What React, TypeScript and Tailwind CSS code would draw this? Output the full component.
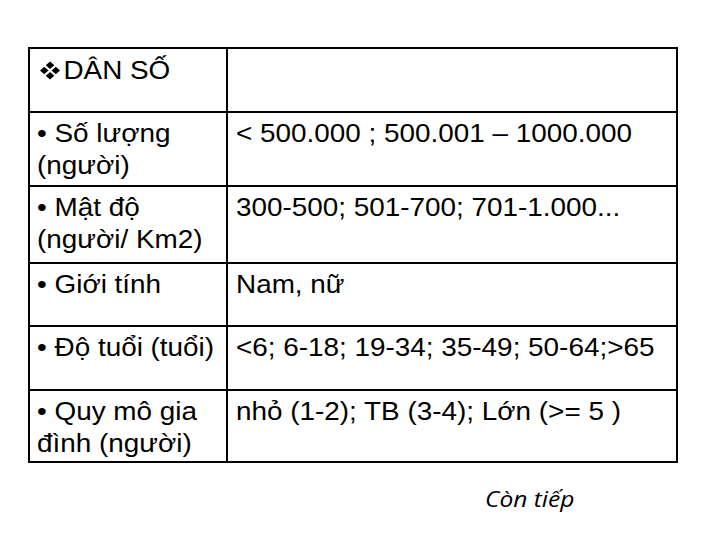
const rows: { h: string; left: string[]; right: string }[] = [
  { h: "h-[74px]", left: ["• Số lượng", "(người)"], right: "< 500.000 ; 500.001 – 1000.000" },
  { h: "h-[77px]", left: ["• Mật độ", "(người/ Km2)"], right: "300-500; 501-700; 701-1.000..." },
  { h: "h-[63px]", left: ["• Giới tính"], right: "Nam, nữ" },
  { h: "h-[64px]", left: ["• Độ tuổi (tuổi)"], right: "<6; 6-18; 19-34; 35-49; 50-64;>65" },
  { h: "h-[72px]", left: ["• Quy mô gia", "đình (người)"], right: "nhỏ (1-2); TB (3-4); Lớn (>= 5 )" },
];

function Stretch({ children }: { children: React.ReactNode }) {
  return <span className="inline-block origin-left scale-x-[1.115] whitespace-nowrap">{children}</span>;
}

function Diamonds() {
  return (
    <svg width="18" height="19" viewBox="0 0 18 18" className="inline-block mr-[3px] -mt-[4px] align-middle">
      <path d="M9 0 L12.8 3.8 L9 7.6 L5.2 3.8 Z" fill="#000" />
      <path d="M9 10.4 L12.8 14.2 L9 18 L5.2 14.2 Z" fill="#000" />
      <path d="M3.8 5.2 L7.6 9 L3.8 12.8 L0 9 Z" fill="#000" />
      <path d="M14.2 5.2 L18 9 L14.2 12.8 L10.4 9 Z" fill="#000" />
    </svg>
  );
}

export default function App() {
  return (
    <div className="w-[720px] h-[540px] bg-white overflow-hidden pt-[47px] text-black font-['Liberation_Sans',Arial,sans-serif]">
      <div className="ml-[28px] w-[650px] border-2 border-black text-[25px] leading-[32px]">
        <div className="flex h-[62px]">
          <div className="w-[196px] pl-[10px] pt-[5px]">
            <Stretch>
              <Diamonds />DÂN SỐ
            </Stretch>
          </div>
          <div className="flex-1 border-l-2 border-black" />
        </div>
        {rows.map((r, i) => (
          <div key={i} className={`flex border-t-2 border-black ${r.h}`}>
            <div className="w-[196px] pl-[7px] pt-[4px]">
              <Stretch>
                {r.left.map((l, j) => (
                  <div key={j}>{l}</div>
                ))}
              </Stretch>
            </div>
            <div className="flex-1 border-l-2 border-black pl-[8px] pt-[4px]">
              <Stretch>{r.right}</Stretch>
            </div>
          </div>
        ))}
      </div>
      <div className="ml-[485px] mt-[20px] text-[22px] leading-[30px] italic font-['Open_Sans',sans-serif]">
        <Stretch>Còn tiếp</Stretch>
      </div>
    </div>
  );
}
